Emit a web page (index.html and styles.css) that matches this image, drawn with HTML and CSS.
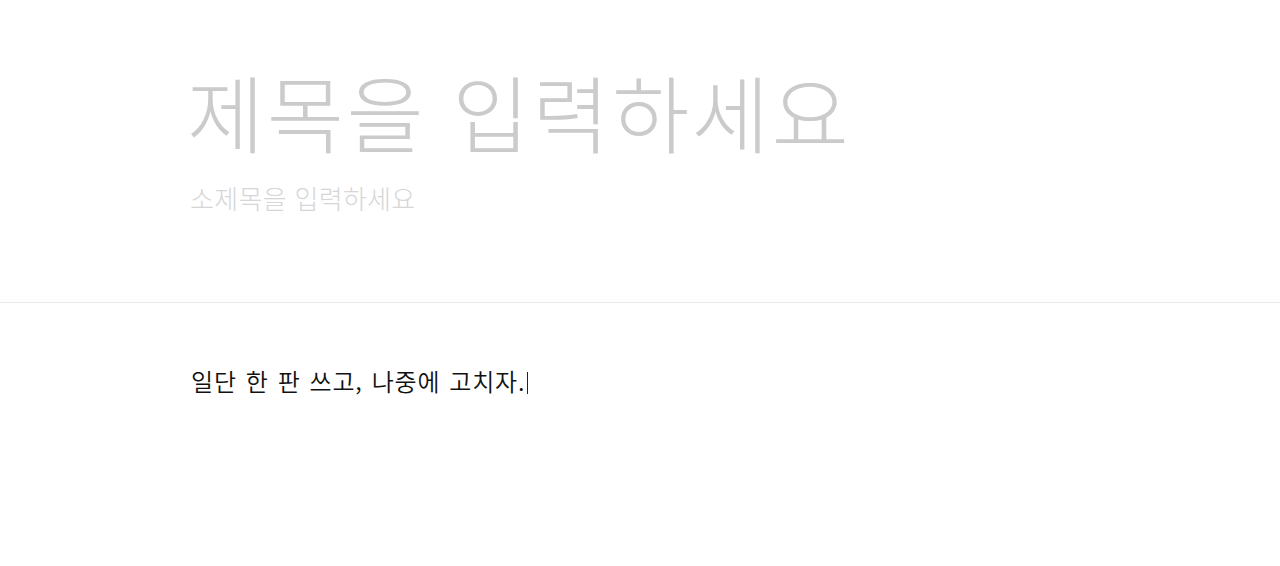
FILE: index.html
```html
<!DOCTYPE html>
<html lang="ko">
<head>
<meta charset="utf-8">
<link rel="stylesheet" href="styles.css">
</head>
<body>
<div class="page">
  <header class="head">
    <h1 class="title">제목을 입력하세요</h1>
    <p class="subtitle">소제목을 입력하세요</p>
  </header>
  <main class="body">
    <p class="text">일단 한 판 쓰고, 나중에 고치자.<span class="caret"></span></p>
  </main>
</div>
</body>
</html>
```
FILE: styles.css
```css
html, body {
  margin: 0;
  padding: 0;
  background: #fff;
}
body {
  font-family: "Noto Sans CJK KR", "Noto Sans", sans-serif;
}
.page {
  width: 1280px;
  height: 566px;
  overflow: hidden;
}
.head {
  height: 303px;
  border-bottom: 1px solid #e9e9e9;
  padding-left: 187px;
  box-sizing: border-box;
  padding-top: 53px;
}
.title {
  margin: 0;
  font-family: "Noto Sans CJK KR", serif;
  font-weight: 300;
  font-size: 84px;
  line-height: 116px;
  letter-spacing: 2.5px;
  color: #cbcbcb;
}
.subtitle {
  margin: 11px 0 0 3px;
  font-size: 26px;
  line-height: 36px;
  font-weight: 300;
  letter-spacing: 0.3px;
  color: #d6d6d6;
}
.body {
  padding-left: 191px;
  padding-top: 59px;
}
.text {
  margin: 0;
  font-size: 24px;
  line-height: 38px;
  font-weight: 350;
  letter-spacing: 0.8px;
  word-spacing: 1.5px;
  color: #111;
}
.caret {
  display: inline-block;
  width: 1px;
  height: 22px;
  background: #222;
  vertical-align: -3px;
  margin-left: 2px;
}
```
